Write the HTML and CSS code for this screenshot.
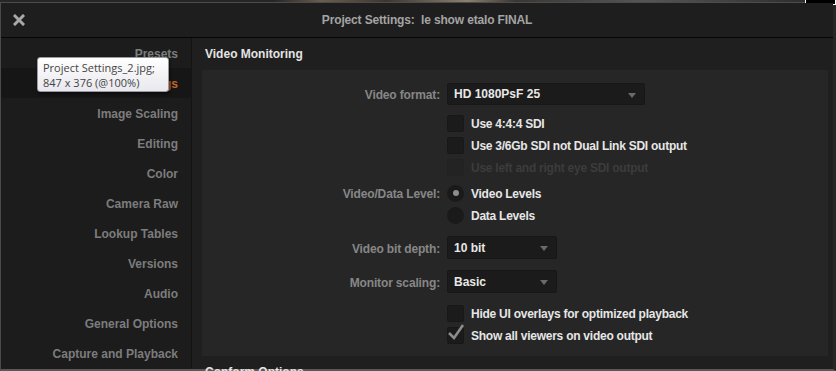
FILE: index.html
```html
<!DOCTYPE html>
<html lang="en">

<head>
    <meta charset="UTF-8">
    <title>Project Settings</title>
    <link rel="stylesheet" href="styles.css">
</head>

<body>
    <div class="strip">
        <div class="strip-photo"></div>
        <div class="strip-box"></div>
    </div>

    <div class="window">
        <div class="titlebar">
            <span class="close">
                <svg width="12" height="12" viewBox="0 0 12 12">
                    <path d="M2 2 L10 10 M10 2 L2 10" stroke="#a8a8a8" stroke-width="3" stroke-linecap="square" />
                </svg>
            </span>
            <span class="title">Project Settings:&nbsp; le show etalo FINAL</span>
        </div>

        <div class="main">
            <div class="sidebar">
                <div class="nav">Presets</div>
                <div class="nav active">Master Settings</div>
                <div class="nav">Image Scaling</div>
                <div class="nav">Editing</div>
                <div class="nav">Color</div>
                <div class="nav">Camera Raw</div>
                <div class="nav">Lookup Tables</div>
                <div class="nav">Versions</div>
                <div class="nav">Audio</div>
                <div class="nav">General Options</div>
                <div class="nav">Capture and Playback</div>

                <div class="tooltip">
                    <div>Project Settings_2.jpg;</div>
                    <div>847 x 376 (@100%)</div>
                </div>
            </div>

            <div class="content">
                <div class="section-title">Video Monitoring</div>

                <div class="panel">
                    <div class="row">
                        <div class="lbl">Video format:</div>
                        <div class="select wide">HD 1080PsF 25<span class="arrow"></span></div>
                    </div>

                    <div class="row check-first">
                        <div class="lbl"></div>
                        <span class="box"></span><span class="opt">Use 4:4:4 SDI</span>
                    </div>
                    <div class="row">
                        <div class="lbl"></div>
                        <span class="box"></span><span class="opt">Use 3/6Gb SDI not Dual Link SDI output</span>
                    </div>
                    <div class="row">
                        <div class="lbl"></div>
                        <span class="box disabled"></span><span class="opt off">Use left and right eye SDI output</span>
                    </div>

                    <div class="row radios">
                        <div class="lbl">Video/Data Level:</div>
                        <span class="radio on"></span><span class="opt">Video Levels</span>
                    </div>
                    <div class="row">
                        <div class="lbl"></div>
                        <span class="radio"></span><span class="opt">Data Levels</span>
                    </div>

                    <div class="row sel-row">
                        <div class="lbl">Video bit depth:</div>
                        <div class="select">10 bit<span class="arrow"></span></div>
                    </div>
                    <div class="row sel-row">
                        <div class="lbl">Monitor scaling:</div>
                        <div class="select">Basic<span class="arrow"></span></div>
                    </div>

                    <div class="row check-last">
                        <div class="lbl"></div>
                        <span class="box"></span><span class="opt">Hide UI overlays for optimized playback</span>
                    </div>
                    <div class="row">
                        <div class="lbl"></div>
                        <span class="box">
                            <svg class="tick" width="20" height="20" viewBox="0 0 20 20">
                                <path d="M3 11 L8 16 L17 3" fill="none" stroke="#8c8c8c" stroke-width="2.6" />
                            </svg>
                        </span><span class="opt">Show all viewers on video output</span>
                    </div>
                </div>

                <div class="section-title">Conform Options</div>
            </div>
        </div>
    </div>
</body>

</html>
```

FILE: styles.css
```css
* {
    margin: 0;
    padding: 0;
    box-sizing: border-box;
}

body {
    width: 836px;
    height: 371px;
    overflow: hidden;
    background-color: #1f1f1f;
    font-family: "Liberation Sans", Arial, sans-serif;
    font-size: 12px;
    font-weight: bold;
}

.strip {
    height: 3px;
    display: flex;
    background-color: #2a2a2a;
    border-bottom: 1px solid #4c4c4c;
}

.strip-photo {
    flex: 1;
    background: linear-gradient(to right, #262626 0%, #262626 34%, #6a5e4e 40%, #3b3630 48%, #8a8070 58%, #3a3632 64%, #555 80%, #2e2e2e 100%);
}

.strip-box {
    width: 31px;
    height: 5px;
    background-color: #000;
    border: 1px solid #fff;
    border-top: none;
}

.window {
    height: 368px;
    border-left: 1px solid #4a4a4a;
    border-right: 3px solid #262626;
    border-bottom: 2px solid #585858;
    display: flex;
    flex-direction: column;
}

.titlebar {
    height: 35px;
    flex: none;
    display: flex;
    align-items: center;
    border-bottom: 1px solid #050505;
    background-color: #1e1e1e;
}

.close {
    width: 12px;
    height: 12px;
    margin-left: 12px;
    display: flex;
}

.title {
    flex: 1;
    text-align: center;
    color: #a4a4a4;
    font-size: 12px;
    letter-spacing: -0.15px;
    padding-right: 4px;
}

.main {
    flex: 1;
    display: flex;
    min-height: 0;
}

.sidebar {
    position: relative;
    width: 191px;
    flex: none;
    background-color: #1c1c1c;
    border-right: 1px solid #141414;
}

.nav {
    height: 30px;
    line-height: 28px;
    padding-top: 2px;
    text-align: right;
    padding-right: 13px;
    color: #7c7c7c;
}

.nav.active {
    background-color: #161616;
    color: #c0662a;
}

.tooltip {
    position: absolute;
    left: 36px;
    top: 19px;
    width: 132px;
    height: 35px;
    padding: 2px 5px;
    background: linear-gradient(#ffffff, #e8e8ee);
    border: 1px solid #9a9aa2;
    border-radius: 3px;
    box-shadow: 1px 2px 3px rgba(0, 0, 0, 0.5);
    color: #444;
    font-family: "Open Sans", "Liberation Sans", sans-serif;
    font-weight: normal;
    font-size: 11px;
    line-height: 15px;
}

.content {
    flex: 1;
    padding: 0 5px 0 10px;
    background-color: #1f1f1f;
}

.section-title {
    height: 30px;
    line-height: 28px;
    padding-top: 2px;
    padding-left: 3px;
    color: #e4e4e4;
    margin-bottom: 2px;
}

.panel {
    background-color: #262626;
    padding: 13px 0 10px;
}

.row {
    display: flex;
    align-items: center;
    height: 22px;
}

.lbl {
    width: 238px;
    flex: none;
    margin-right: 7px;
    padding-top: 2px;
    text-align: right;
    color: #878787;
    letter-spacing: -0.15px;
}

.check-first {
    margin-top: 7px;
}

.radios {
    margin-top: 4px;
}

.sel-row {
    height: 23px;
    margin-top: 10px;
}

.sel-row + .sel-row {
    margin-top: 11px;
}

.check-last {
    margin-top: 9px;
}

.box {
    position: relative;
    width: 17px;
    height: 17px;
    flex: none;
    background-color: #1b1b1b;
    border: 1px solid #181818;
    border-radius: 2px;
    margin-right: 7px;
}

.box.disabled {
    background-color: #232323;
    border-color: #222;
}

.tick {
    position: absolute;
    left: -2px;
    top: -6px;
}

.radio {
    width: 17px;
    height: 17px;
    flex: none;
    border-radius: 50%;
    background-color: #1a1a1a;
    margin-right: 7px;
    display: flex;
    align-items: center;
    justify-content: center;
}

.radio.on::after {
    content: "";
    width: 6px;
    height: 6px;
    border-radius: 50%;
    background-color: #8e8e8e;
}

.opt {
    padding-top: 2px;
    color: #e6e6e6;
    letter-spacing: -0.25px;
}

.opt.off {
    color: #3c3c3c;
}

.select {
    position: relative;
    width: 110px;
    height: 23px;
    line-height: 23px;
    padding-left: 6px;
    background-color: #1b1b1b;
    border: 1px solid #171717;
    border-radius: 2px;
    color: #e8e8e8;
}

.select.wide {
    width: 198px;
    height: 22px;
    line-height: 21px;
}

.arrow {
    position: absolute;
    right: 8px;
    top: 9px;
    border-left: 4px solid transparent;
    border-right: 4px solid transparent;
    border-top: 5px solid #6a6a6a;
}
```
